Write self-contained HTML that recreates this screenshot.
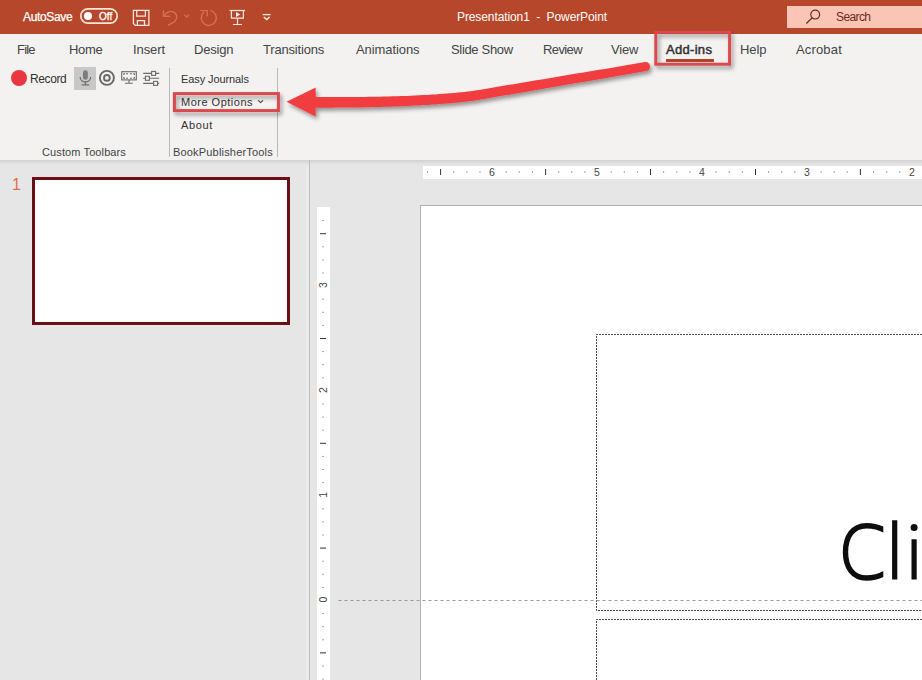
<!DOCTYPE html>
<html>
<head>
<meta charset="utf-8">
<title>PowerPoint</title>
<style>
html,body{margin:0;padding:0;}
body{width:922px;height:680px;overflow:hidden;position:relative;background:#e6e6e6;font-family:"Liberation Sans",sans-serif;}
.abs{position:absolute;}
.t{position:absolute;white-space:nowrap;line-height:1;}
#titlebar{left:0;top:0;width:922px;height:34px;background:#b7472a;}
#ribbon{left:0;top:34px;width:922px;height:126px;background:#f3f2f1;}
#ribshadow{left:0;top:160px;width:922px;height:5px;background:linear-gradient(#d2d2d2,#e6e6e6);}
.menu{font-size:13px;color:#444;top:43px;}
.rb{font-size:11px;color:#333;}
.grp{font-size:11px;color:#444;top:147px;}
</style>
</head>
<body>
<div id="titlebar" class="abs"></div>
<div id="ribbon" class="abs"></div>
<div id="ribshadow" class="abs"></div>

<!-- title bar -->
<div class="t" id="autosave" style="letter-spacing:-0.35px;-webkit-text-stroke:0.25px #fff;left:23px;top:11px;font-size:12px;color:#fff;">AutoSave</div>
<div class="abs" style="left:83.9px;top:11.8px;width:8.6px;height:8.6px;border-radius:4.3px;background:#fff;"></div>
<div class="t" id="off" style="left:99px;top:11.8px;font-size:10px;color:#fff;-webkit-text-stroke:0.3px #fff;">Off</div>
<div class="t" id="ttl" style="letter-spacing:-0.1px;left:457px;top:10.6px;font-size:12px;color:#fff;">Presentation1&nbsp; -&nbsp; PowerPoint</div>
<div class="abs" style="left:787px;top:6px;width:135px;height:22px;background:#fbc5b5;"></div>
<div class="t" id="search" style="letter-spacing:-0.6px;left:836px;top:11px;font-size:12px;color:#6a2a20;">Search</div>

<!-- menu -->
<div class="t menu" id="m1" style="letter-spacing:-0.8px;left:17px;">File</div>
<div class="t menu" id="m2" style="letter-spacing:-0.3px;left:69px;">Home</div>
<div class="t menu" id="m3" style="letter-spacing:-0.1px;left:133px;">Insert</div>
<div class="t menu" id="m4" style="letter-spacing:-0.2px;left:194px;">Design</div>
<div class="t menu" id="m5" style="letter-spacing:-0.18px;left:263px;">Transitions</div>
<div class="t menu" id="m6" style="letter-spacing:-0.08px;left:356px;">Animations</div>
<div class="t menu" id="m7" style="letter-spacing:-0.33px;left:451px;">Slide Show</div>
<div class="t menu" id="m8" style="letter-spacing:-0.62px;left:543px;">Review</div>
<div class="t menu" id="m9" style="letter-spacing:-0.2px;left:611px;">View</div>
<div class="t menu" id="m10" style="letter-spacing:0.3px;left:666px;-webkit-text-stroke:0.5px #333;color:#333;">Add-ins</div>
<div class="t menu" id="m11" style="letter-spacing:-0.1px;left:740px;">Help</div>
<div class="t menu" id="m12" style="letter-spacing:0.16px;left:796px;">Acrobat</div>
<div class="abs" style="left:666px;top:59px;width:47.5px;height:3px;background:#b0442b;"></div>

<!-- ribbon contents -->
<div class="abs" style="left:11px;top:70px;width:16px;height:16px;border-radius:8px;background:#e8373e;"></div>
<div class="t rb" id="rec" style="left:30px;top:72.5px;font-size:12px;letter-spacing:-0.4px;">Record</div>
<div class="abs" style="left:74px;top:67px;width:22px;height:23px;background:#c8c8c8;"></div>
<div class="abs" style="left:169px;top:68px;width:1px;height:89px;background:#b9b9b9;"></div>
<div class="abs" style="left:277px;top:68px;width:1px;height:89px;background:#b9b9b9;"></div>
<div class="t rb" id="ej" style="letter-spacing:-0.1px;left:181px;top:73.8px;">Easy Journals</div>
<div class="t rb" id="mo" style="letter-spacing:0.5px;left:181px;top:97px;">More Options</div>
<div class="t rb" id="ab" style="letter-spacing:0.65px;left:181px;top:120px;">About</div>
<div class="t grp" id="g1" style="letter-spacing:0.11px;left:42px;">Custom Toolbars</div>
<div class="t grp" id="g2" style="letter-spacing:0.18px;left:173px;">BookPublisherTools</div>

<!-- workspace -->
<div class="abs" style="left:306px;top:167px;width:3px;height:513px;background:#ebebeb;"></div>
<div class="abs" style="left:309px;top:160px;width:1px;height:520px;background:#bcbcbc;"></div>
<div class="t" id="n1" style="left:12px;top:177.4px;font-size:16px;color:#d9704f;">1</div>
<div class="abs" style="left:32px;top:177px;width:252px;height:142px;border:3px solid #6b0f16;background:#fff;"></div>
<div class="abs" style="left:423px;top:165.5px;width:499px;height:13.5px;background:#fff;"></div>
<div class="abs" style="left:317px;top:207px;width:13.4px;height:473px;background:#fff;"></div>
<div class="abs" style="left:420px;top:205px;width:502px;height:475px;background:#fff;border-left:1px solid #b0b0b0;border-top:1px solid #b0b0b0;"></div>

<svg class="abs" id="ov" style="left:0;top:0;" width="922" height="680" viewBox="0 0 922 680">
<!-- rulers -->
<rect x="427.0" y="171" width="1" height="2" fill="#a8a8a8"/>
<rect x="440.1" y="169" width="1" height="6" fill="#333"/>
<rect x="453.2" y="171" width="1" height="2" fill="#a8a8a8"/>
<rect x="466.4" y="171" width="1" height="2" fill="#a8a8a8"/>
<rect x="479.5" y="171" width="1" height="2" fill="#a8a8a8"/>
<text x="492.0" y="176.2" font-size="10.5" fill="#444" text-anchor="middle" font-family="Liberation Sans, sans-serif">6</text>
<rect x="505.7" y="171" width="1" height="2" fill="#a8a8a8"/>
<rect x="518.8" y="171" width="1" height="2" fill="#a8a8a8"/>
<rect x="532.0" y="171" width="1" height="2" fill="#a8a8a8"/>
<rect x="545.1" y="169" width="1" height="6" fill="#333"/>
<rect x="558.2" y="171" width="1" height="2" fill="#a8a8a8"/>
<rect x="571.3" y="171" width="1" height="2" fill="#a8a8a8"/>
<rect x="584.4" y="171" width="1" height="2" fill="#a8a8a8"/>
<text x="597.0" y="176.2" font-size="10.5" fill="#444" text-anchor="middle" font-family="Liberation Sans, sans-serif">5</text>
<rect x="610.7" y="171" width="1" height="2" fill="#a8a8a8"/>
<rect x="623.8" y="171" width="1" height="2" fill="#a8a8a8"/>
<rect x="636.9" y="171" width="1" height="2" fill="#a8a8a8"/>
<rect x="650.0" y="169" width="1" height="6" fill="#333"/>
<rect x="663.1" y="171" width="1" height="2" fill="#a8a8a8"/>
<rect x="676.3" y="171" width="1" height="2" fill="#a8a8a8"/>
<rect x="689.4" y="171" width="1" height="2" fill="#a8a8a8"/>
<text x="701.9" y="176.2" font-size="10.5" fill="#444" text-anchor="middle" font-family="Liberation Sans, sans-serif">4</text>
<rect x="715.6" y="171" width="1" height="2" fill="#a8a8a8"/>
<rect x="728.7" y="171" width="1" height="2" fill="#a8a8a8"/>
<rect x="741.9" y="171" width="1" height="2" fill="#a8a8a8"/>
<rect x="755.0" y="169" width="1" height="6" fill="#333"/>
<rect x="768.1" y="171" width="1" height="2" fill="#a8a8a8"/>
<rect x="781.2" y="171" width="1" height="2" fill="#a8a8a8"/>
<rect x="794.3" y="171" width="1" height="2" fill="#a8a8a8"/>
<text x="806.9" y="176.2" font-size="10.5" fill="#444" text-anchor="middle" font-family="Liberation Sans, sans-serif">3</text>
<rect x="820.6" y="171" width="1" height="2" fill="#a8a8a8"/>
<rect x="833.7" y="171" width="1" height="2" fill="#a8a8a8"/>
<rect x="846.8" y="171" width="1" height="2" fill="#a8a8a8"/>
<rect x="859.9" y="169" width="1" height="6" fill="#333"/>
<rect x="873.0" y="171" width="1" height="2" fill="#a8a8a8"/>
<rect x="886.2" y="171" width="1" height="2" fill="#a8a8a8"/>
<rect x="899.3" y="171" width="1" height="2" fill="#a8a8a8"/>
<text x="911.8" y="176.2" font-size="10.5" fill="#444" text-anchor="middle" font-family="Liberation Sans, sans-serif">2</text>
<rect x="322" y="678.6" width="2" height="1" fill="#a8a8a8"/>
<rect x="322" y="665.5" width="2" height="1" fill="#a8a8a8"/>
<rect x="320" y="652.4" width="6" height="1" fill="#333"/>
<rect x="322" y="639.3" width="2" height="1" fill="#a8a8a8"/>
<rect x="322" y="626.2" width="2" height="1" fill="#a8a8a8"/>
<rect x="322" y="613.1" width="2" height="1" fill="#a8a8a8"/>
<text transform="translate(327.3,599.6) rotate(-90)" font-size="10.5" fill="#444" text-anchor="middle" font-family="Liberation Sans, sans-serif">0</text>
<rect x="322" y="586.9" width="2" height="1" fill="#a8a8a8"/>
<rect x="322" y="573.8" width="2" height="1" fill="#a8a8a8"/>
<rect x="322" y="560.7" width="2" height="1" fill="#a8a8a8"/>
<rect x="320" y="547.6" width="6" height="1" fill="#333"/>
<rect x="322" y="534.5" width="2" height="1" fill="#a8a8a8"/>
<rect x="322" y="521.4" width="2" height="1" fill="#a8a8a8"/>
<rect x="322" y="508.3" width="2" height="1" fill="#a8a8a8"/>
<text transform="translate(327.3,494.8) rotate(-90)" font-size="10.5" fill="#444" text-anchor="middle" font-family="Liberation Sans, sans-serif">1</text>
<rect x="322" y="482.1" width="2" height="1" fill="#a8a8a8"/>
<rect x="322" y="469.0" width="2" height="1" fill="#a8a8a8"/>
<rect x="322" y="455.9" width="2" height="1" fill="#a8a8a8"/>
<rect x="320" y="442.8" width="6" height="1" fill="#333"/>
<rect x="322" y="429.7" width="2" height="1" fill="#a8a8a8"/>
<rect x="322" y="416.6" width="2" height="1" fill="#a8a8a8"/>
<rect x="322" y="403.5" width="2" height="1" fill="#a8a8a8"/>
<text transform="translate(327.3,390.0) rotate(-90)" font-size="10.5" fill="#444" text-anchor="middle" font-family="Liberation Sans, sans-serif">2</text>
<rect x="322" y="377.3" width="2" height="1" fill="#a8a8a8"/>
<rect x="322" y="364.2" width="2" height="1" fill="#a8a8a8"/>
<rect x="322" y="351.1" width="2" height="1" fill="#a8a8a8"/>
<rect x="320" y="338.0" width="6" height="1" fill="#333"/>
<rect x="322" y="324.9" width="2" height="1" fill="#a8a8a8"/>
<rect x="322" y="311.8" width="2" height="1" fill="#a8a8a8"/>
<rect x="322" y="298.7" width="2" height="1" fill="#a8a8a8"/>
<text transform="translate(327.3,285.2) rotate(-90)" font-size="10.5" fill="#444" text-anchor="middle" font-family="Liberation Sans, sans-serif">3</text>
<rect x="322" y="272.5" width="2" height="1" fill="#a8a8a8"/>
<rect x="322" y="259.4" width="2" height="1" fill="#a8a8a8"/>
<rect x="322" y="246.3" width="2" height="1" fill="#a8a8a8"/>
<rect x="320" y="233.2" width="6" height="1" fill="#333"/>
<rect x="322" y="220.1" width="2" height="1" fill="#a8a8a8"/>
<!-- placeholders & guide -->
<g fill="none" stroke="#4a4a4a" stroke-width="1" stroke-dasharray="2 1">
<path d="M922 334.5 H596.5 V610.5 H922"/>
<path d="M922 619.5 H596.5 V680"/>
</g>
<path d="M338.5 600.5 H922" fill="none" stroke="#9a9a9a" stroke-width="1" stroke-dasharray="3 3"/>
<!-- Cli -->
<clipPath id="cc"><rect x="830" y="510" width="53.3" height="80"/></clipPath>
<g fill="none" stroke="#0d0d0d">
<path clip-path="url(#cc)" d="M888 532 C880 527 873 525.7 866.5 525.7 C852.5 525.7 845.5 537 845.5 552 C845.5 567 852.5 578 866.5 578 C873 578 880 576.6 888 571.4" stroke-width="5.4"/>
<path d="M894.7 520.3 V579.5 M914.1 539.2 V579.5" stroke-width="5.2"/>
</g>
<circle cx="914.1" cy="527.4" r="3.5" fill="#0d0d0d"/>

<rect x="80.8" y="8.8" width="36.4" height="14.4" rx="7.2" fill="none" stroke="#fbe3dc" stroke-width="1.7"/>
<!-- save icon -->
<g fill="none" stroke="#fbe9e3" stroke-width="1.25" stroke-linejoin="miter">
<path d="M133.4 10.3 H148.9 V25.4 H135.4 L133.4 23.4 Z"/>
<path d="M136.7 10.3 V16.2 H145.4 V10.3"/>
<path d="M137.4 25.4 V20.6 H144.5 V25.4"/>
</g>
<!-- undo (dim) -->
<g fill="none" stroke="#d66f53" stroke-width="1.4" stroke-linecap="round" stroke-linejoin="round">
<path d="M163.5 10.8 V16.2 H169.8"/>
<path d="M164.4 15.6 C166.2 12.4 169.8 10.6 173 11.8 C177.4 13.6 177.8 18.6 174.6 21.6 L168.6 25.2"/>
<path d="M184.5 14.8 L186.7 17 L188.9 14.8" stroke-width="1.2"/>
<!-- redo (dim) -->
<path d="M203.5 12.6 A7.5 7.5 0 1 0 210.9 10.7"/>
<path d="M200.8 10.6 H207.3 V15.8"/>
</g>
<!-- present icon -->
<g fill="none" stroke="#fbe9e3" stroke-width="1.2">
<path d="M229.6 10.5 H245.1"/>
<path d="M231.4 10.5 V18.2 H243.4 V10.5"/>
<path d="M237.5 18.2 V24.4 M232.9 24.5 H242"/>
</g>
<path d="M236 12 L240.3 14.5 L236 17 Z" fill="#fbe9e3"/>
<!-- customize QAT -->
<g fill="none" stroke="#fbe9e3">
<path d="M262.7 14.6 H270.6" stroke-width="1.3"/>
<path d="M263.8 17 L266.7 19.6 L269.6 17" stroke-width="1.5"/>
</g>
<!-- search magnifier -->
<g fill="none" stroke="#6a2a20" stroke-width="1.2" stroke-linecap="round">
<circle cx="815.2" cy="14.6" r="4.4"/>
<path d="M812 18 L806.6 23.2"/>
</g>
<!-- mic -->
<rect x="83" y="70.2" width="4.8" height="9.6" rx="2.4" fill="#7c7c7c"/>
<g fill="none" stroke="#6f6f6f" stroke-width="1.3">
<path d="M80.2 77 C80.2 83.6 90.6 83.6 90.6 77"/>
<path d="M85.4 82 V84.4 M81.6 84.8 H89.2"/>
</g>
<!-- target -->
<g fill="none" stroke="#686868">
<circle cx="106.9" cy="77.9" r="7" stroke-width="1.9"/>
<circle cx="106.9" cy="77.9" r="2.9" stroke-width="1.9"/>
</g>
<!-- monitor -->
<g fill="none" stroke="#6a6a6a" stroke-width="1.1">
<rect x="121.7" y="71.7" width="14.6" height="8.2"/>
<path d="M129 80 V83 M125 83.3 H132.8"/>
<path d="M123.8 75 V73.7 H125 M126 73.7 H128 M130 73.7 H132 M133.2 73.7 H134.4 V75 M123.8 77 V78.3 H125 M126 78.3 H128 M130 78.3 H132 M133.2 78.3 H134.4 V77" stroke-width="1.1"/>
</g>
<!-- sliders -->
<g fill="#f3f2f1" stroke="#6a6a6a" stroke-width="1.1">
<path d="M143.2 73.4 H159.2 M143.2 78.3 H159.2 M143.2 83.4 H159.2"/>
<rect x="151.6" y="71.4" width="4" height="4"/>
<rect x="145.4" y="76.3" width="4" height="4"/>
<rect x="153.6" y="81.4" width="4" height="4"/>
</g>
<!-- more options caret -->
<path d="M258.2 100.4 L260.6 102.6 L263 100.4" fill="none" stroke="#3b3a39" stroke-width="1.1"/>


<defs>
<filter id="sh" x="-10%" y="-30%" width="120%" height="180%">
<feGaussianBlur in="SourceAlpha" stdDeviation="2.3"/>
<feOffset dx="1.5" dy="3.2" result="o"/>
<feComponentTransfer><feFuncA type="linear" slope="0.4"/></feComponentTransfer>
<feMerge><feMergeNode/><feMergeNode in="SourceGraphic"/></feMerge>
</filter>
</defs>
<g filter="url(#sh)">
<rect x="655.8" y="32.2" width="73.8" height="32" fill="none" stroke="#dc484d" stroke-width="3"/>
<rect x="174.4" y="93.6" width="104" height="17" fill="none" stroke="#dc484d" stroke-width="3"/>
<g><path d="M286.5 101.7 L315.7 87.6 L315.7 116.4 Z" fill="#f23c3f"/>
<path d="M313.0 107.7 L316.0 107.7 L320.9 107.7 L325.9 107.7 L330.8 107.7 L335.7 107.6 L340.6 107.6 L345.5 107.6 L350.4 107.5 L355.3 107.4 L360.2 107.4 L365.0 107.3 L369.8 107.2 L374.6 107.1 L379.3 106.9 L384.0 106.8 L388.7 106.7 L393.3 106.5 L397.9 106.4 L402.4 106.2 L406.9 106.0 L411.3 105.8 L415.7 105.6 L420.0 105.4 L424.2 105.1 L428.4 104.9 L432.5 104.6 L436.5 104.4 L440.4 104.1 L444.3 103.8 L448.1 103.5 L451.8 103.2 L455.4 102.8 L458.9 102.5 L462.4 102.1 L465.7 101.7 L468.9 101.3 L472.1 100.9 L475.1 100.5 L478.0 100.0 L480.8 99.6 L486.5 98.6 L492.2 97.6 L497.9 96.6 L503.7 95.6 L509.4 94.7 L515.1 93.7 L520.8 92.7 L526.5 91.7 L532.2 90.7 L537.9 89.7 L543.6 88.8 L549.3 87.8 L555.0 86.8 L560.7 85.8 L566.4 84.8 L572.1 83.8 L577.9 82.8 L583.6 81.9 L589.3 80.9 L595.0 79.9 L600.7 78.9 L606.4 77.9 L612.1 76.9 L617.8 76.0 L623.5 75.0 L629.2 74.0 L634.9 73.0 L640.6 72.0 L646.4 71.0 L644.8 62.2 L639.1 63.1 L633.4 64.1 L627.7 65.0 L622.0 66.0 L616.3 66.9 L610.6 67.9 L604.9 68.9 L599.1 69.8 L593.4 70.8 L587.7 71.7 L582.0 72.7 L576.3 73.6 L570.6 74.6 L564.9 75.6 L559.2 76.5 L553.4 77.5 L547.7 78.4 L542.0 79.4 L536.3 80.3 L530.6 81.3 L524.9 82.3 L519.2 83.2 L513.5 84.2 L507.7 85.1 L502.0 86.1 L496.3 87.0 L490.6 88.0 L484.9 89.0 L479.2 89.9 L476.5 90.3 L473.7 90.8 L470.8 91.2 L467.7 91.5 L464.6 91.9 L461.3 92.3 L457.9 92.6 L454.5 92.9 L450.9 93.3 L447.3 93.6 L443.5 93.8 L439.7 94.1 L435.8 94.4 L431.8 94.6 L427.8 94.9 L423.6 95.1 L419.4 95.3 L415.2 95.5 L410.8 95.7 L406.5 95.9 L402.0 96.0 L397.5 96.2 L393.0 96.3 L388.4 96.4 L383.7 96.6 L379.1 96.7 L374.3 96.8 L369.6 96.8 L364.8 96.9 L360.0 97.0 L355.2 97.0 L350.3 97.1 L345.5 97.1 L340.6 97.1 L335.7 97.1 L330.8 97.1 L325.8 97.1 L320.9 97.1 L316.0 97.1 L313.0 97.1 Z" fill="#f23c3f"/><circle cx="645.6" cy="66.6" r="4.50" fill="#f23c3f"/></g>
</g>

</svg>
</body>
</html>
